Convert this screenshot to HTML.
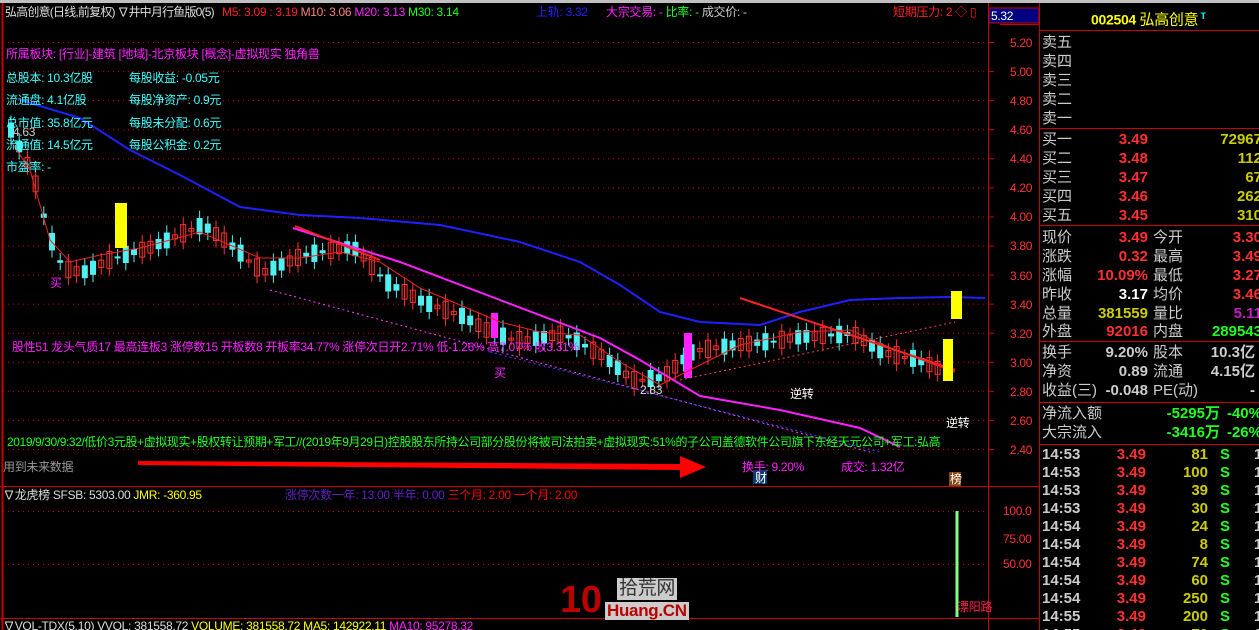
<!DOCTYPE html>
<html><head><meta charset="utf-8"><style>
*{margin:0;padding:0;box-sizing:border-box}
html,body{width:1259px;height:630px;background:#000;overflow:hidden}
body{position:relative;font-family:"Liberation Sans","WenQuanYi Zen Hei","Noto Sans CJK SC",sans-serif;font-size:12px}
.t{position:absolute;white-space:nowrap;line-height:14px;letter-spacing:-0.3px}
.r{position:absolute;white-space:nowrap;line-height:19px;font-size:15px}
.b{font-weight:bold}
</style></head><body>
<div style="position:absolute;left:0;top:0;width:1259px;height:3px;background:#c0c0c0"></div>
<svg id="s" width="1259" height="630" style="position:absolute;left:0;top:0">
<g stroke="#c00" stroke-width="1" fill="none">
<line x1="2.5" y1="3" x2="2.5" y2="630" stroke-width="2"/>
<line x1="988.5" y1="3" x2="988.5" y2="630"/>
<line x1="1039.5" y1="3" x2="1039.5" y2="630"/>
<line x1="0" y1="486.5" x2="1039" y2="486.5"/>
<line x1="0" y1="618.5" x2="1039" y2="618.5"/>
<line x1="1040" y1="30.5" x2="1259" y2="30.5"/>
<line x1="1040" y1="128.5" x2="1259" y2="128.5"/>
<line x1="1040" y1="225.5" x2="1259" y2="225.5"/>
<line x1="1040" y1="341.5" x2="1259" y2="341.5"/>
<line x1="1040" y1="402.5" x2="1259" y2="402.5"/>
<line x1="1040" y1="444.5" x2="1259" y2="444.5"/>
<line x1="1040" y1="24.5" x2="1000" y2="24.5"/>
</g>
<g id="grid" stroke="#c00" stroke-dasharray="1,4"></g>
<rect x="989" y="8" width="50" height="15" fill="#000080" stroke="#c00"/>
<g id="cd"></g>
<polyline fill="none" stroke="#2020ff" stroke-width="2" points="20,100 80,118 130,150 180,175 240,207 300,215 360,218 440,225 520,242 580,262 620,285 660,312 700,322 760,325 800,312 850,300 900,298 950,297 985,298"/>
<polyline fill="none" stroke="#ff20ff" stroke-width="2" points="293,228 400,262 500,300 600,338 640,360 700,396 780,410 860,428 900,447"/>
<line x1="270" y1="290" x2="870" y2="452" stroke="#ff40ff" stroke-dasharray="2,3"/>
<line x1="490" y1="352" x2="880" y2="452" stroke="#4040ff" stroke-dasharray="2,3"/>
<polyline fill="none" stroke="#f22" stroke-width="2" points="295,226 380,260"/>
<polyline fill="none" stroke="#f22" stroke-width="2" points="740,298 955,370"/>
<line x1="680" y1="380" x2="955" y2="322" stroke="#f44" stroke-dasharray="2,3"/>
<polyline fill="none" stroke="#e22" stroke-width="1" points="10,140 30,170 50,240 70,262 100,255 140,248 200,232 260,258 300,258 340,252 380,262 420,288 460,305 500,322 540,332 580,335 620,362 660,385 690,370 740,345 800,332 850,330 900,352 955,372"/>
<rect x="115" y="203" width="12" height="45" fill="#ff0"/>
<rect x="951" y="291" width="11" height="28" fill="#ff0"/>
<rect x="943" y="339" width="10" height="42" fill="#ff0"/>
<line x1="957" y1="511" x2="957" y2="617" stroke="#80ff80" stroke-width="3"/>
<polygon points="138,461 680,464 680,456 706,467 680,478 680,470 138,465" fill="#f00"/>
<rect x="753" y="470" width="14" height="14" fill="#0b3a6b"/>
<rect x="949" y="472" width="12" height="14" fill="#8b4513"/>
</svg>
<div class="t" style="left:5px;top:5px;color:#ddd;letter-spacing:-0.8px">弘高创意(日线,前复权) ∇井中月行鱼版0(5)</div>
<div class="t" style="left:222px;top:5px;color:#ff2020">M5: 3.09 : 3.19 <span style="color:#ff8080">M10: 3.06</span> <span style="color:#ff20ff">M20: 3.13</span> <span style="color:#20ff20">M30: 3.14</span></div>
<div class="t" style="left:536px;top:5px;color:#2020ff">上轨: 3.32</div>
<div class="t" style="left:606px;top:5px;color:#ff20ff">大宗交易: - <span style="color:#20ff20">比率: -</span> <span style="color:#ccc">成交价: -</span></div>
<div class="t" style="left:893px;top:5px;color:#ff2020">短期压力: 2 ◇ ▯</div>
<div class="t" style="left:991px;top:9px;color:#fff">5.32</div>
<div class="t" style="left:6px;top:47px;color:#ff20ff">所属板块: [行业]-建筑 [地域]-北京板块 [概念]-虚拟现实 独角兽</div>
<div class="t" style="left:6px;top:71px;color:#40ffff">总股本: 10.3亿股</div><div class="t" style="left:129px;top:71px;color:#40ffff">每股收益: -0.05元</div>
<div class="t" style="left:6px;top:93px;color:#40ffff">流通盘: 4.1亿股</div><div class="t" style="left:129px;top:93px;color:#40ffff">每股净资产: 0.9元</div>
<div class="t" style="left:6px;top:116px;color:#40ffff">总市值: 35.8亿元</div><div class="t" style="left:129px;top:116px;color:#40ffff">每股未分配: 0.6元</div>
<div class="t" style="left:6px;top:138px;color:#40ffff">流通值: 14.5亿元</div><div class="t" style="left:129px;top:138px;color:#40ffff">每股公积金: 0.2元</div>
<div class="t" style="left:6px;top:160px;color:#40ffff">市盈率: -</div>
<div class="t" style="left:13px;top:125px;color:#ccc">4.63</div>
<div class="t" style="left:12px;top:340px;color:#ff20ff">股性51 龙头气质17 最高连板3 涨停数15 开板数8 开板率34.77% 涨停次日开2.71% 低-1.26% 高7.07% 收3.31%</div>
<div class="t" style="left:50px;top:276px;color:#ff20ff">买</div>
<div class="t" style="left:494px;top:366px;color:#ff20ff">买</div>
<div class="t" style="left:640px;top:383px;color:#ddd">2.83</div>
<div class="t" style="left:790px;top:387px;color:#fff">逆转</div>
<div class="t" style="left:946px;top:416px;color:#fff">逆转</div>
<div class="t" style="left:7px;top:435px;color:#20ff20;letter-spacing:-0.4px">2019/9/30/9:32/低价3元股+虚拟现实+股权转让预期+军工//(2019年9月29日)控股股东所持公司部分股份将被司法拍卖+虚拟现实:51%的子公司盖德软件公司旗下东经天元公司+军工:弘高</div>
<div class="t" style="left:3px;top:460px;color:#999">用到未来数据</div>
<div class="t" style="left:742px;top:460px;color:#ff20ff">换手: 9.20%</div>
<div class="t" style="left:841px;top:460px;color:#ff20ff">成交: 1.32亿</div>
<div class="t" style="left:755px;top:471px;color:#fff">财</div>
<div class="t" style="left:950px;top:472px;color:#fff">榜</div>
<div class="t" style="left:3px;top:488px;color:#ddd">∇龙虎榜 SFSB: 5303.00 <span style="color:#ff0">JMR: -360.95</span></div>
<div class="t" style="left:285px;top:488px;color:#6020c0">涨停次数一年: 13.00 半年: 0.00 <span style="color:#f00">三个月: 2.00 一个月: 2.00</span></div>
<div class="t" style="left:957px;top:600px;color:#ff2050">漂阳路</div>
<div class="t" style="left:3px;top:619px;color:#ddd">∇VOL-TDX(5,10) VVOL: 381558.72 <span style="color:#ff0">VOLUME: 381558.72 MA5: 142922.11</span> <span style="color:#ff20ff">MA10: 95278.32</span></div>
<div class="t" style="left:560px;top:580px;color:#b00;font-size:38px;font-weight:bold;line-height:40px">10</div>
<div class="t" style="left:617px;top:578px;color:#333;background:#ccc;font-size:19px;line-height:22px;padding:0 2px">拾荒网</div>
<div class="t" style="left:605px;top:602px;color:#b00;background:#ccc;font-size:17px;font-weight:bold;line-height:18px;padding:0 2px">Huang.CN</div>
<div id="ax"></div>
<div class="t b" style="left:1091px;top:8px;color:#ff0;font-size:14px;line-height:16px">002504 <span style="font-weight:normal;font-size:15px">弘高创意</span><sup style="color:#0ff;font-size:9px"> T</sup></div>
<div id="rp"></div>
<script>
var g=document.getElementById('grid'),h='';
for(var i=0;i<15;i++){var y=42.5+i*29.07;h+='<line x1="3" x2="988" y1="'+y+'" y2="'+y+'"/><line x1="988" x2="994" y1="'+y+'" y2="'+y+'" stroke-dasharray="none"/>';}
h+='<line x1="3" x2="988" y1="511.5" y2="511.5"/><line x1="3" x2="988" y1="564.5" y2="564.5"/>';
g.innerHTML=h;
var ax='',p=['5.20','5.00','4.80','4.60','4.40','4.20','4.00','3.80','3.60','3.40','3.20','3.00','2.80','2.60','2.40'];
for(i=0;i<15;i++)ax+='<div class="t" style="left:1010px;top:'+(36+i*29.07)+'px;color:#f33">'+p[i]+'</div>';
ax+='<div class="t" style="left:1003px;top:504px;color:#f33">100.0</div><div class="t" style="left:1003px;top:532px;color:#f33">75.00</div><div class="t" style="left:1003px;top:557px;color:#f33">50.00</div>';
document.getElementById('ax').innerHTML=ax;
function Y(v){return 43+(5.2-v)/0.2*29.07}
var pts=[[8,4.6],[30,4.3],[45,3.9],[60,3.65],[80,3.62],[110,3.72],[150,3.8],[200,3.95],[230,3.8],[260,3.62],[300,3.74],[350,3.8],[385,3.55],[420,3.42],[460,3.32],[490,3.2],[520,3.15],[560,3.2],[600,3.05],[630,2.88],[660,2.9],[690,3.08],[730,3.12],[770,3.15],[800,3.18],[850,3.2],[880,3.07],[910,3.03],[940,2.95]];
function P(x){for(var k=0;k<pts.length-1;k++){if(x<=pts[k+1][0]){var a=pts[k],b=pts[k+1];return a[1]+(b[1]-a[1])*(x-a[0])/(b[0]-a[0]);}}return 2.95}
var c='';for(var x=8;x<942;x+=8.2){var m=P(x),s=Math.sin(x*1.7)*0.06,o=m+s,cl=m-s,hi=Math.max(o,cl)+0.05,lo=Math.min(o,cl)-0.05,up=cl>o,col=up?'#ff3030':'#50f0f0';
c+='<line x1="'+(x+3)+'" x2="'+(x+3)+'" y1="'+Y(hi)+'" y2="'+Y(lo)+'" stroke="'+col+'"/>';
var t=Y(Math.max(o,cl)),hh=Math.max(2,Y(Math.min(o,cl))-t);
c+=up?'<rect x="'+(x+0.5)+'" y="'+t+'" width="5" height="'+hh+'" fill="none" stroke="'+col+'"/>':'<rect x="'+x+'" y="'+t+'" width="6" height="'+hh+'" fill="'+col+'"/>';}
c+='<rect x="684" y="333" width="8" height="45" fill="#ff20ff"/><rect x="491" y="313" width="7" height="25" fill="#ff20ff"/>';
document.getElementById('cd').innerHTML=c;
var R='',L=function(x,y,t,col,cls){R+='<div class="r '+(cls||'')+'" style="left:'+x+'px;top:'+y+'px;color:'+col+'">'+t+'</div>'};
var Rr=function(rx,y,t,col){R+='<div class="r b" style="right:'+(1259-rx)+'px;top:'+y+'px;color:'+col+'">'+t+'</div>'};
['卖五','卖四','卖三','卖二','卖一'].forEach(function(t,i){L(1042,33+i*19,t,'#ccc')});
var bs=[['买一','3.49','72967'],['买二','3.48','112'],['买三','3.47','67'],['买四','3.46','262'],['买五','3.45','310']];
bs.forEach(function(r,i){var y=130+i*19;L(1042,y,r[0],'#ccc');Rr(1148,y,r[1],'#ff3030');Rr(1262,y,r[2],'#cccc00')});
var q=[['现价','3.49','#ff3030','今开','3.30','#ff3030'],['涨跌','0.32','#ff3030','最高','3.49','#ff3030'],['涨幅','10.09%','#ff3030','最低','3.27','#ff3030'],['昨收','3.17','#fff','均价','3.46','#ff3030'],['总量','381559','#cccc00','量比','5.11','#c020c0'],['外盘','92016','#ff3030','内盘','289543','#20ff20']];
q.forEach(function(r,i){var y=228+i*19;if(i==5)y=322;L(1042,y,r[0],'#ccc');Rr(1148,y,r[1],r[2]);L(1153,y,r[3],'#ccc');Rr(1262,y,r[4],r[5])});
var z=[['换手','9.20%','股本','10.3亿'],['净资','0.89','流通','4.15亿'],['收益(三)','-0.048','PE(动)','-']];
z.forEach(function(r,i){var y=343+i*19;L(1042,y,r[0],'#ccc');Rr(1148,y,r[1],'#ccc');L(1153,y,r[2],'#ccc');Rr(1255,y,r[3],'#ccc')});
L(1042,404,'净流入额','#ccc');Rr(1220,404,'-5295万','#20ff20');Rr(1262,404,'-40%','#20ff20');
L(1042,423,'大宗流入','#ccc');Rr(1220,423,'-3416万','#20ff20');Rr(1262,423,'-26%','#20ff20');
var tk=[['14:53','81'],['14:53','100'],['14:53','39'],['14:53','30'],['14:54','24'],['14:54','8'],['14:54','74'],['14:54','60'],['14:54','250'],['14:55','200'],['14:55','70']];
tk.forEach(function(r,i){var y=445+i*18;L(1042,y,r[0],'#ccc','b');Rr(1146,y,'3.49','#ff3030');Rr(1208,y,r[1],'#cccc00');L(1220,y,'S','#20ff20','b');L(1254,y,'1','#ccc','b')});
document.getElementById('rp').innerHTML=R;
</script>
</body></html>
